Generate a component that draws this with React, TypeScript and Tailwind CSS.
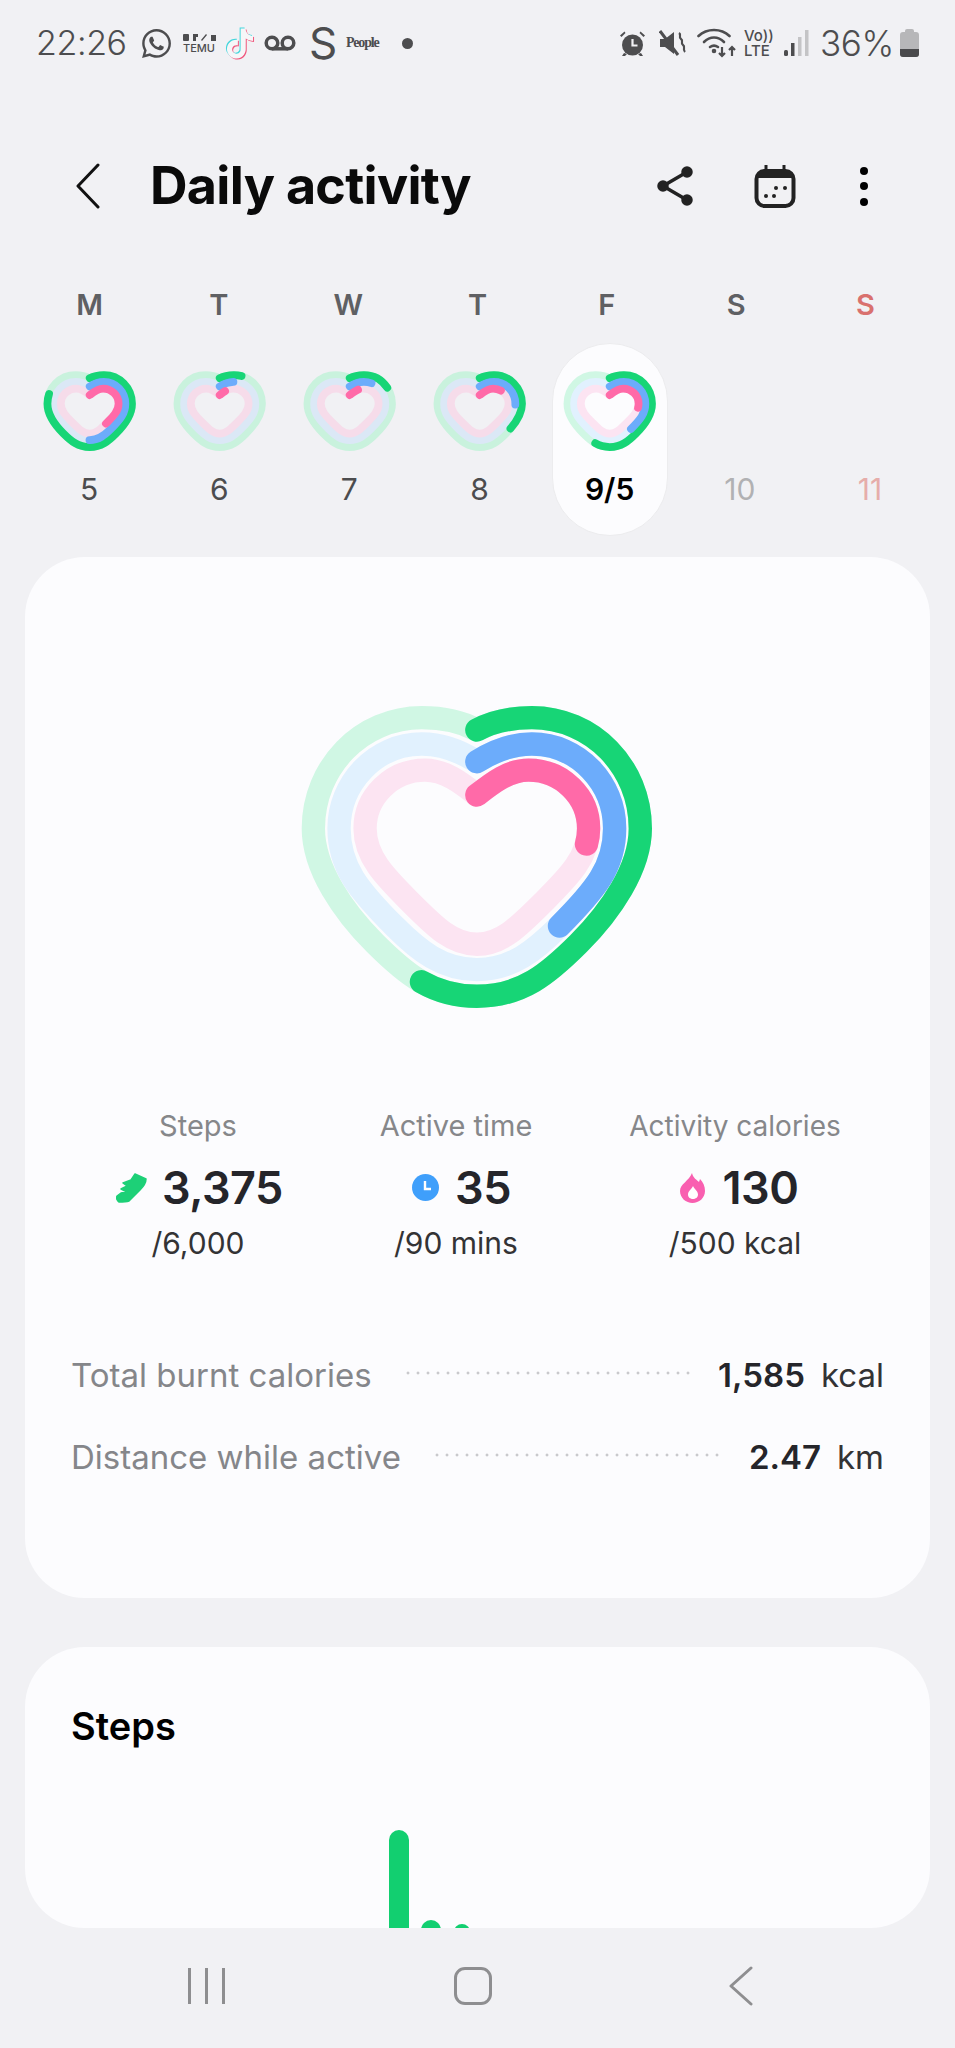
import { FaWhatsapp } from "react-icons/fa";
import { SiTiktok } from "react-icons/si";

const FONT = "font-['Inter','Liberation_Sans',sans-serif]";

const RING_OUTER =
  "M595 150C650 120 710 113 760 113C940 113 1085 260 1085 445C1085 565 995 695 900 790C810 880 730 948 595 948C460 948 380 880 290 790C195 695 105 565 105 445C105 260 250 113 430 113C480 113 540 120 595 150";
const RING_MIDDLE =
  "M595 245C650 210 710 192 760 192C900 192 1008 310 1008 445C1008 560 950 630 840 740C770 810 700 868 595 868C490 868 420 810 350 740C240 630 182 560 182 445C182 310 290 192 430 192C480 192 540 210 595 245";
const RING_INNER =
  "M595 345C640 310 690 270 750 270C850 270 930 350 930 445C930 530 870 590 800 660C720 740 670 792 595 792C520 792 470 740 390 660C320 590 260 530 260 445C260 350 340 270 440 270C500 270 550 310 595 345";

interface HeartProps {
  steps: number;
  active: number;
  calories: number;
  muted?: boolean;
  width: number;
  strokeWidth: number;
}

function Heart({ steps, active, calories, muted, width, strokeWidth }: HeartProps) {
  const rings = [
    { d: RING_OUTER, value: steps, track: muted ? "#c9f2dd" : "#d0f7e4", color: "#17d576" },
    { d: RING_MIDDLE, value: active, track: muted ? "#dbe8f6" : "#e1f1fe", color: "#6cacfb" },
    { d: RING_INNER, value: calories, track: muted ? "#f6dcea" : "#fce4f2", color: "#ff6aa8" },
  ];
  return (
    <svg viewBox="65 78 1055 907" width={width} height={(width * 907) / 1055} className="overflow-visible">
      <g fill="none" strokeWidth={strokeWidth}>
        {rings.map((r) => (
          <path key={r.track} d={r.d} stroke={r.track} />
        ))}
        {rings.map((r) => (
          <path
            key={r.color}
            d={r.d}
            stroke={r.color}
            strokeLinecap="round"
            pathLength={100}
            strokeDasharray={`${r.value} 200`}
          />
        ))}
      </g>
    </svg>
  );
}

const DAYS = [
  { letter: "M", label: "5", heart: [80, 50, 38] },
  { letter: "T", label: "6", heart: [9, 7, 4] },
  { letter: "W", label: "7", heart: [17, 11, 6] },
  { letter: "T", label: "8", heart: [35, 24, 14] },
  { letter: "F", label: "9/5", heart: [56, 38, 26], selected: true },
  { letter: "S", label: "10" },
  { letter: "S", label: "11", sunday: true },
];

function StatusLeft() {
  return (
    <div className="flex items-center text-[#4d4d4f]">
      <span className="ml-[-1px] w-[104px] text-[34px] font-light leading-none tracking-[-0.4px]">22:26</span>
      <FaWhatsapp className="h-[33px] w-[33px]" />
      <div className="ml-[8px] flex w-[36px] flex-col items-center">
        <svg width="34" height="9" viewBox="0 0 34 9" fill="#4d4d4f">
          <rect x="1" y="1" width="6" height="7" rx="1" />
          <path d="M11 1h5v3h-2v4h-3zM19 7l5-6 1 1-5 6zM29 2h5v6h-5z" />
        </svg>
        <span className="mt-[1px] text-[11px] font-medium leading-[10px]">TEMU</span>
      </div>
      <div className="relative ml-[6px] h-[35px] w-[31px]">
        <SiTiktok className="absolute left-[1px] top-0 h-[33px] w-[30px] text-[#45d6dc]" />
        <SiTiktok className="absolute left-[3px] top-[2px] h-[33px] w-[30px] text-[#f0567c]" />
        <SiTiktok className="absolute left-[2px] top-[1px] h-[33px] w-[30px] text-[#f6f6f8]" />
      </div>
      <svg className="ml-[10px]" width="32" height="16" viewBox="0 0 32 16" fill="none" stroke="#4d4d4f" strokeWidth="3.5">
        <circle cx="8" cy="8" r="5.8" />
        <circle cx="24" cy="8" r="5.8" />
        <path d="M8 13.8h16" />
      </svg>
      <span className="ml-[13px] w-[27px] text-[44px] font-normal leading-none">S</span>
      <span className="ml-[10px] w-[36px] font-['Liberation_Serif',serif] text-[14px] font-bold leading-none tracking-[-1.2px]">People</span>
      <span className="ml-[20px] h-[11px] w-[11px] rounded-full bg-[#4d4d4f]" />
    </div>
  );
}

function StatusRight() {
  return (
    <div className="flex items-center text-[#4d4d4f]">
      <svg width="27" height="27" viewBox="0 0 27 27" fill="#4d4d4f">
        <circle cx="13.5" cy="15" r="10.5" />
        <path d="M1 5.500 5.500 1.500 6.500 3 2.500 7ZM26 5.500 21.500 1.500 20.500 3 24.500 7ZM5 23l-2 3h3l2-2ZM22 23l2 3h-3l-2-2Z" />
        <path d="M13.500 9v6.500h5" fill="none" stroke="#f1f1f4" strokeWidth="2.2" />
      </svg>
      <svg className="ml-[13px]" width="27" height="27" viewBox="0 0 27 27">
        <path d="M1 9h5l9-7v22l-9-7H1Z" fill="#4d4d4f" />
        <path d="M1 1 19 25" stroke="#4d4d4f" strokeWidth="3" />
        <path d="M20 3c3 2-1 4 2 6s-1 4 2 6-1 4 2 7" fill="none" stroke="#4d4d4f" strokeWidth="2.2" />
      </svg>
      <svg className="ml-[11px]" width="41" height="30" viewBox="0 0 41 30" fill="none" stroke="#4d4d4f" strokeWidth="2.6" strokeLinecap="round">
        <path d="M1.500 8C10 0 24 0 32.500 8" />
        <path d="M7 14C13 8 21 8 27 14" />
        <path d="M13 19c3-2 5-2 8 0" />
        <circle cx="17" cy="23" r="1" fill="#4d4d4f" />
        <path d="M25 19v9M22 25l3 3 3-3M35 28v-9M32 22l3-3 3 3" strokeWidth="2.2" strokeLinecap="butt" />
      </svg>
      <div className="ml-[6px] flex w-[29px] flex-col text-[15px] font-medium leading-[15px]">
        <span>Vo))</span>
        <span>LTE</span>
      </div>
      <svg className="ml-[11px]" width="25" height="26" viewBox="0 0 25 26">
        <rect x="0" y="20" width="4" height="6" rx="1.500" fill="#4d4d4f" />
        <rect x="7" y="13" width="3.500" height="13" fill="#4d4d4f" />
        <rect x="14" y="7" width="3.500" height="19" fill="#c4c4c6" />
        <rect x="21" y="0" width="3.500" height="26" fill="#c4c4c6" />
      </svg>
      <span className="ml-[11px] w-[80px] text-[35px] font-light leading-none tracking-[-0.4px]">36%</span>
      <div className="flex h-[28px] w-[19px] flex-col items-center">
        <div className="h-[3px] w-[9px] rounded-t-[2px] bg-[#b7b7b9]" />
        <div className="flex h-[25px] w-full flex-col justify-end overflow-hidden rounded-[3px] bg-[#b7b7b9]">
          <div className="h-[8px] bg-[#4a4a4c]" />
        </div>
      </div>
    </div>
  );
}

function HeaderBar() {
  return (
    <div className="mt-[99px] flex h-[50px] items-center pl-[76px] pr-[87px]">
      <svg width="24" height="46" viewBox="0 0 24 46" fill="none" stroke="#111" strokeWidth="3" strokeLinecap="round" strokeLinejoin="round">
        <path d="M22 2 2 23l20 21" />
      </svg>
      <h1 className="ml-[50px] text-[52px] font-bold leading-none tracking-[-0.7px] text-[#0a0a0a]">Daily activity</h1>
      <svg className="ml-auto" width="36" height="42" viewBox="0 0 36 42" fill="#222" stroke="#222" strokeWidth="3.500">
        <path d="M30 7 6 21l24 14" fill="none" />
        <circle cx="30" cy="7" r="4" />
        <circle cx="6" cy="21" r="4" />
        <circle cx="30" cy="35" r="4" />
      </svg>
      <svg className="ml-[61px]" width="42" height="44" viewBox="0 0 42 44" fill="none">
        <path d="M12 1v6M30 1v6" stroke="#222" strokeWidth="3" />
        <rect x="2.500" y="7" width="37" height="35" rx="8" stroke="#222" strokeWidth="4" />
        <path d="M2 14c0-5 4-8 8-8h22c4 0 8 3 8 8Z" fill="#222" />
        <circle cx="22" cy="24" r="2" fill="#222" />
        <circle cx="31" cy="24" r="2" fill="#222" />
        <circle cx="12" cy="32" r="2" fill="#222" />
        <circle cx="20" cy="32" r="2" fill="#222" />
      </svg>
      <div className="ml-[64px] flex flex-col gap-[7.5px]">
        <span className="h-[8px] w-[8px] rounded-full bg-black" />
        <span className="h-[8px] w-[8px] rounded-full bg-black" />
        <span className="h-[8px] w-[8px] rounded-full bg-black" />
      </div>
    </div>
  );
}

function WeekStrip() {
  return (
    <div className="mt-[76px]">
      <div className="grid h-[36px] grid-cols-7 px-[25px]">
        {DAYS.map((day, i) => (
          <span
            key={i}
            className={`text-center text-[29px] font-semibold leading-[36px] ${day.sunday ? "text-[#d9716e]" : "text-[#5f6063]"}`}
          >
            {day.letter}
          </span>
        ))}
      </div>
      <div className="grid h-[234px] grid-cols-7 pl-[24px] pr-[20px]">
        {DAYS.map((day, i) => (
          <div
            key={i}
            className={`mx-auto mt-[20px] flex h-[193px] w-[116px] flex-col items-center rounded-full border pt-[28px] ${
              day.selected ? "border-[#ececee] bg-[#fcfcfe]" : "border-transparent"
            }`}
          >
            <div className="flex h-[81px] w-[91px] justify-center">
              {day.heart && (
                <Heart
                  steps={day.heart[0]}
                  active={day.heart[1]}
                  calories={day.heart[2]}
                  muted={!day.selected}
                  width={91}
                  strokeWidth={90}
                />
              )}
            </div>
            <span
              className={`mt-[18px] text-[30px] leading-[36px] ${
                day.selected
                  ? "font-semibold text-black"
                  : day.sunday
                  ? "text-[#e6adaa]"
                  : day.label === "10"
                  ? "text-[#b1b1b3]"
                  : "text-[#4c4c4e]"
              }`}
            >
              {day.label}
            </span>
          </div>
        ))}
      </div>
    </div>
  );
}

function ShoeIcon() {
  return (
    <svg width="31" height="30" viewBox="0 0 31 30" fill="#1dd077" stroke="#1dd077" strokeWidth="1.500" strokeLinejoin="round">
      <path d="M19 1 30 6C30 10 27 14 24 17L13 28C10 29 5 29 3 29 1 28 0 25 1 23L5 20 11 19 5 16 11 13 7 10 15 7Z" />
    </svg>
  );
}

function ClockIcon() {
  return (
    <svg width="27" height="27" viewBox="0 0 27 27">
      <circle cx="13.500" cy="13.500" r="13.500" fill="#3f9ffb" />
      <path d="M13 7v8h6" fill="none" stroke="#fff" strokeWidth="2.400" />
    </svg>
  );
}

function FlameIcon() {
  return (
    <svg width="25" height="30" viewBox="0 0 25 30">
      <path d="M12 0C13 5 17 7 19 9L20 6C23 9 25 13 25 18 25 25 19 30 12.500 30 6 30 0 25 0 18 0 11 9 8 12 0Z" fill="#f95fb0" />
      <path d="M13 13C14 16 18 18 18 21.500 18 24.500 15.500 26 13 26 10.500 26 8 24.500 8 21.500 8 18 12 16 13 13Z" fill="#fff" />
    </svg>
  );
}

const STATS = [
  { label: "Steps", value: "3,375", goal: "/6,000", icon: <ShoeIcon />, column: "w-[258px]", row: "ml-[3px] gap-[15px]", size: "text-[29px]" },
  { label: "Active time", value: "35", goal: "/90 mins", icon: <ClockIcon />, column: "w-[258px]", row: "ml-[11px] gap-[16px]", size: "text-[29px]" },
  { label: "Activity calories", value: "130", goal: "/500 kcal", icon: <FlameIcon />, column: "w-[300px]", row: "ml-[8px] gap-[18px]", size: "text-[28px]" },
];

function SummaryCard() {
  return (
    <section className="mx-[25px] h-[1041px] rounded-[60px] bg-[#fcfcfe]">
      <div className="flex justify-center pt-[149px]">
        <div className="ml-[-3px]">
          <Heart steps={56} active={38} calories={26} width={352} strokeWidth={70} />
        </div>
      </div>
      <div className="mt-[99px] flex pl-[44px]">
        {STATS.map((s) => (
          <div key={s.label} className={`flex flex-col items-center ${s.column}`}>
            <span className={`leading-[36px] text-[#86878a] ${s.size}`}>{s.label}</span>
            <div className={`mt-[17px] flex h-[54px] items-center ${s.row}`}>
              {s.icon}
              <span className="text-[45px] font-semibold leading-none tracking-[-0.5px] text-[#25252a]">{s.value}</span>
            </div>
            <span className="mt-[10px] text-[30px] leading-[36px] text-[#333335]">{s.goal}</span>
          </div>
        ))}
      </div>
      <div className="mt-[96px] flex flex-col gap-[45px] px-[46px]">
        <DetailRow label="Total burnt calories" value="1,585" unit="kcal" />
        <DetailRow label="Distance while active" value="2.47" unit="km" />
      </div>
    </section>
  );
}

function DetailRow({ label, value, unit }: { label: string; value: string; unit: string }) {
  return (
    <div className="flex h-[37px] items-center text-[33px] leading-[37px]">
      <span className="text-[#85868a]">{label}</span>
      <div className="ml-[31px] mr-[28px] mb-[4px] h-[4px] flex-1 bg-[radial-gradient(circle,#c9c9cc_1.3px,transparent_1.7px)] bg-[length:10px_4px]" />
      <span className="font-semibold text-[#25252a]">{value}</span>
      <span className="ml-[16px] text-[#333335]">{unit}</span>
    </div>
  );
}

function StepsCard() {
  return (
    <section className="mx-[25px] mt-[49px] h-[281px] overflow-hidden rounded-[60px] bg-[#fcfcfe] px-[46px] pt-[57px]">
      <h2 className="text-[38px] font-semibold leading-[44px] text-black">Steps</h2>
      <div className="flex items-start pl-[318px]">
        <div className="mt-[82px] h-[100px] w-[20px] rounded-t-full bg-[#12cf70]" />
        <div className="ml-[12px] mt-[172px] h-[30px] w-[20px] rounded-t-full bg-[#12cf70]" />
        <div className="ml-[13px] mt-[176px] h-[30px] w-[16px] rounded-t-full bg-[#12cf70]" />
      </div>
    </section>
  );
}

function NavBar() {
  return (
    <div className="mt-[38px] flex h-[40px] items-center">
      <div className="ml-[188px] flex h-[36px] gap-[14px]">
        <div className="w-[3px] bg-[#8e8e90]" />
        <div className="w-[3px] bg-[#8e8e90]" />
        <div className="w-[3px] bg-[#8e8e90]" />
      </div>
      <div className="ml-[229px] h-[38px] w-[38px] rounded-[11px] border-[3px] border-[#8e8e90]" />
      <svg className="ml-[237px]" width="24" height="40" viewBox="0 0 24 40" fill="none" stroke="#8e8e90" strokeWidth="3" strokeLinecap="round" strokeLinejoin="round">
        <path d="M22 2 2 20l20 18" />
      </svg>
    </div>
  );
}

export default function App() {
  return (
    <div className={`h-[2048px] w-[955px] overflow-hidden bg-[#f1f1f4] ${FONT}`}>
      <div className="flex h-[62px] items-center justify-between pl-[37px] pr-[36px] pt-[24px]">
        <StatusLeft />
        <StatusRight />
      </div>
      <HeaderBar />
      <WeekStrip />
      <SummaryCard />
      <StepsCard />
      <NavBar />
    </div>
  );
}
